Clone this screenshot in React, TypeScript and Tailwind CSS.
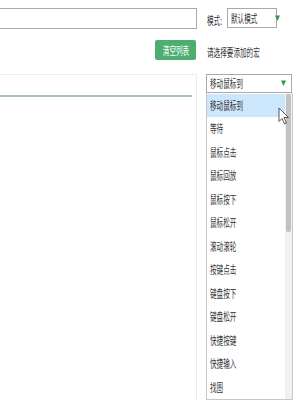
import React from "react";

const items = [
  "移动鼠标到",
  "等待",
  "鼠标点击",
  "鼠标回放",
  "鼠标按下",
  "鼠标松开",
  "滚动滚轮",
  "按键点击",
  "键盘按下",
  "键盘松开",
  "快捷按键",
  "快捷输入",
  "找图",
];

function Arrow() {
  return (
    <svg width="5" height="8" viewBox="0 0 5 8" className="shrink-0">
      <path d="M0 1.5 L5 1.5 L2.5 7 Z" fill="#2f9a4c" />
    </svg>
  );
}

function Cursor() {
  return (
    <svg width="12" height="19" viewBox="0 0 12 19" className="absolute left-[71px] top-[14px]">
      <path d="M1 1 L1 14.5 L4 11.5 L6.5 17 L8.5 16 L6 10.5 L10.5 10.5 Z" fill="#fff" stroke="#555" strokeWidth="1" strokeLinejoin="round" />
    </svg>
  );
}

// the screenshot's text is horizontally squeezed
function T({ children, center }: { children: React.ReactNode; center?: boolean }) {
  return (
    <span
      className={
        "inline-block whitespace-nowrap text-[11px] leading-none scale-x-[0.6] " +
        (center ? "origin-center" : "origin-left")
      }
    >
      {children}
    </span>
  );
}

export default function App() {
  return (
    <div
      className="w-[300px] h-[400px] overflow-hidden bg-white flex text-[#333]"
      style={{ fontFamily: '"Noto Sans CJK SC", "Microsoft YaHei", sans-serif' }}
    >
      <div className="w-[197px] shrink-0 flex flex-col">
        <div className="mt-[8px] h-[21px] border border-l-0 border-[#a9a9a9]" />
        <div className="flex justify-end mt-[11px] pr-[1px]">
          <button className="w-[41px] h-[20px] bg-[#4cae6f] text-white rounded-[2px] flex items-center justify-center overflow-hidden">
            <T center>清空列表</T>
          </button>
        </div>
        <div className="mt-[14px] flex-1 border-t border-r border-[#ececec]">
          <div className="h-[22px] w-[192px] border-b-2 border-[#a9c2b5]" />
        </div>
      </div>

      <div className="flex-1 pl-[10px] flex flex-col">
        <div className="mt-[8px] flex items-center h-[20px]">
          <span className="w-[20px]">
            <T>模式:</T>
          </span>
          <div className="w-[50px] h-[20px] border border-[#a9a9a9] flex items-center justify-between pl-[3px] pr-[4px]">
            <T>默认模式</T>
            <Arrow />
          </div>
        </div>
        <div className="mt-[17px] h-[16px] flex items-center">
          <T>请选择要添加的宏</T>
        </div>
        <div className="mt-[14px] -ml-[1px] w-[86px] h-[20px] border border-[#a9a9a9] flex items-center justify-between pl-[3px] pr-[5px]">
          <T>移动鼠标到</T>
          <Arrow />
        </div>
        <div className="relative -ml-[1px] w-[87px] flex-1 border border-t-0 border-[#c8c8c8] flex">
          <div className="flex-1 flex flex-col pt-[1px]">
            {items.map((t, i) => (
              <div
                key={t}
                className={
                  "h-[23.5px] shrink-0 flex items-center pl-[3px] " + (i === 0 ? "bg-[#cce6fb]" : "")
                }
              >
                <T>{t}</T>
              </div>
            ))}
          </div>
          <div className="w-[7px] bg-[#f1f1f1] flex justify-center pt-[1px]">
            <div className="w-[5px] h-[138px] bg-[#c2c2c2] rounded-[2px]" />
          </div>
          <Cursor />
        </div>
      </div>
    </div>
  );
}
